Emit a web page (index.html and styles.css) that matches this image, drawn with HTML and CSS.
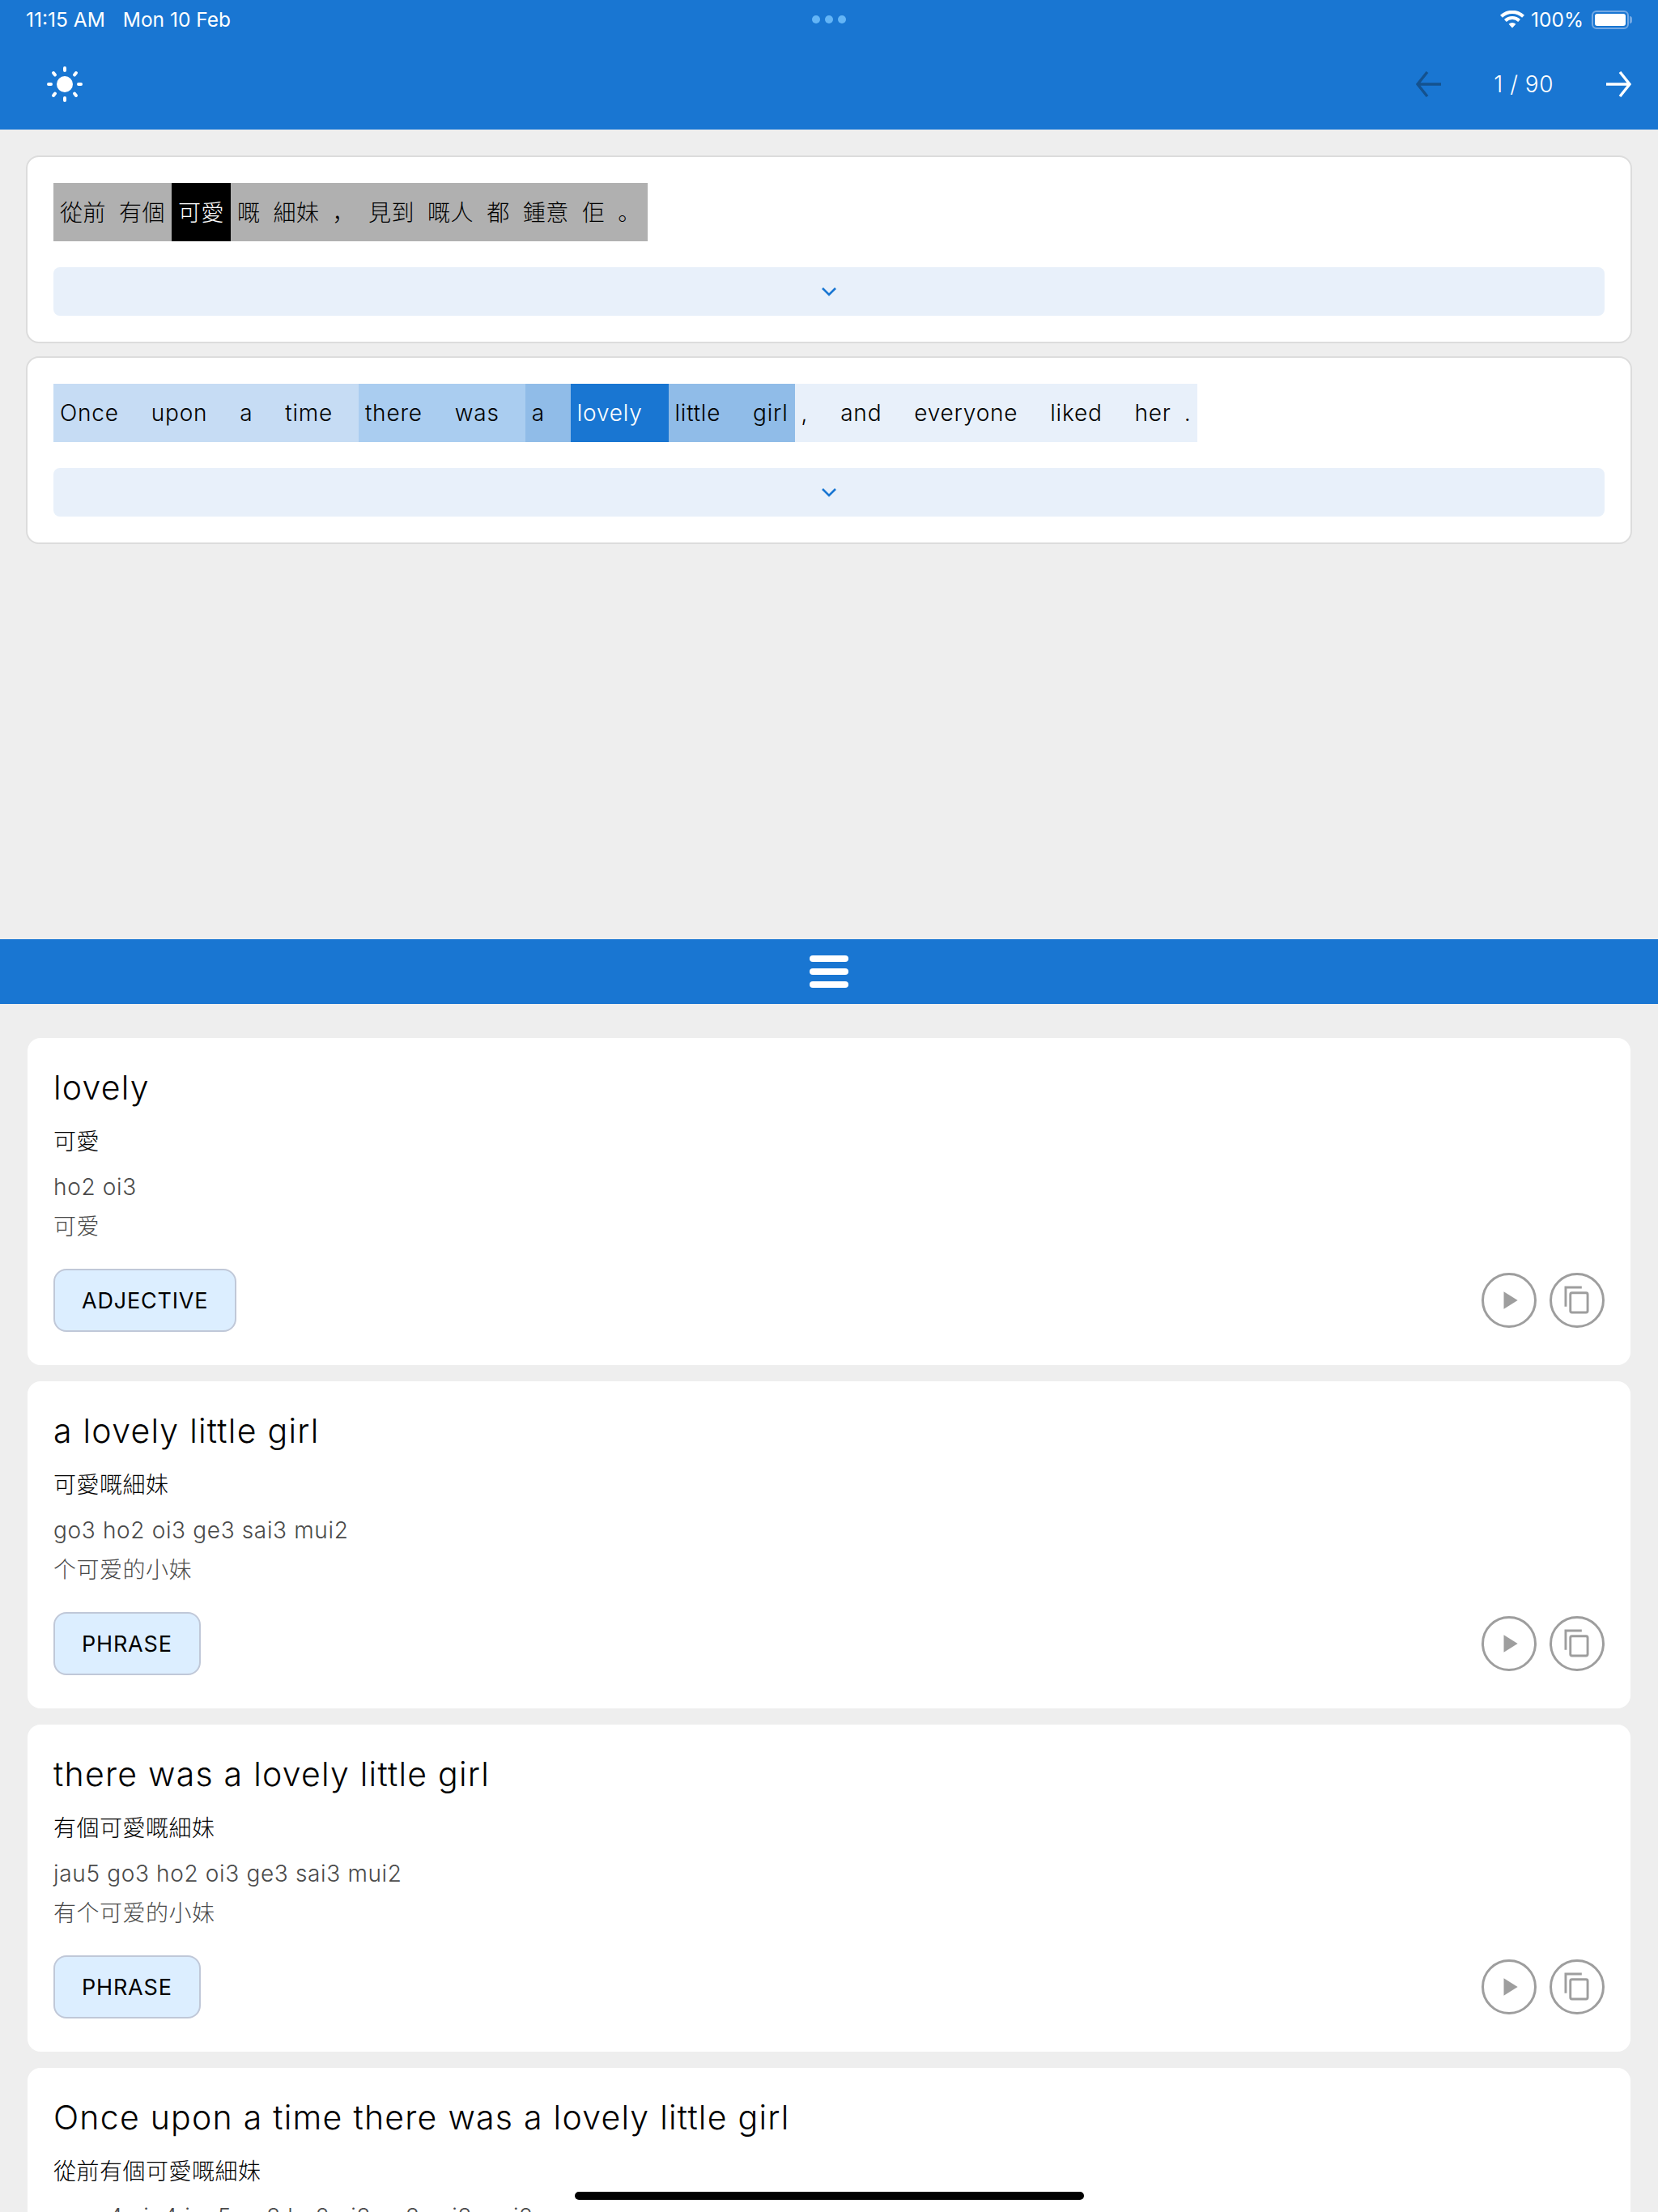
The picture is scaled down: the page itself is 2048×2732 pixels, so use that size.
FILE: index.html
```html
<!DOCTYPE html>
<html lang="en">
<head>
<meta charset="utf-8">
<title>Reader</title>
<link rel="stylesheet" href="styles.css">
</head>
<body>
<header class="appbar">
  <div class="status">
    <div class="status-left"><span>11:15 AM</span><span>Mon 10 Feb</span></div>
    <div class="status-dots"><i></i><i></i><i></i></div>
    <div class="status-right">
      <svg class="wifi" viewBox="0 0 30 22" width="30" height="22"><path d="M15 21.500 10.600 16.800a6.500 6.500 0 0 1 8.800 0zM7.800 13.900 5 11a14.400 14.400 0 0 1 20 0l-2.800 2.900a10.400 10.400 0 0 0-14.400 0zM2.900 8.800 0 5.800a21.600 21.600 0 0 1 30 0l-2.900 3a17.500 17.500 0 0 0-24.200 0z" fill="#fff"/></svg>
      <span>100%</span>
      <div class="battery"><div class="battery-fill"></div></div>
      <div class="battery-cap"></div>
    </div>
  </div>
  <div class="toolbar">
    <svg class="sun" viewBox="0 0 44 44" width="44" height="44"><circle cx="22" cy="22" r="10" fill="#fff"/><g stroke="#fff" stroke-width="4" stroke-linecap="round"><path d="M22 2v3M22 39v3M2 22h3M39 22h3M8 8l2 2.500M34 33.500l2 2.500M36 8l-2 2.500M10 33.500 8 36"/></g></svg>
    <div class="pager">
      <svg viewBox="0 0 32 32" width="32" height="32"><path d="M32 16H4M15 1 3 16l12 15" fill="none" stroke="#14528f" stroke-width="3.400"/></svg>
      <span class="pager-text">1 / 90</span>
      <svg viewBox="0 0 32 32" width="32" height="32"><path d="M0 16h28M17 1l12 15-12 15" fill="none" stroke="#fff" stroke-width="3.400"/></svg>
    </div>
  </div>
</header>

<section class="top-pane">
  <div class="panel">
    <div class="sentence zh">
      <div class="grp g-grey"><span class="w">從前</span><span class="w">有個</span></div>
      <div class="grp g-black"><span class="w">可愛</span></div>
      <div class="grp g-grey"><span class="w">嘅</span><span class="w">細妹</span><span class="w mark">，</span><span class="w">見到</span><span class="w">嘅人</span><span class="w">都</span><span class="w">鍾意</span><span class="w">佢</span><span class="w mark">。</span></div>
    </div>
    <div class="expand"><svg viewBox="0 0 20 12" width="20" height="12"><path d="M2 2l8 8 8-8" fill="none" stroke="#1976d2" stroke-width="2.600"/></svg></div>
  </div>
  <div class="panel">
    <div class="sentence">
      <div class="grp g-1"><span class="w sp">Once</span><span class="w sp">upon</span><span class="w sp">a</span><span class="w sp">time</span></div>
      <div class="grp g-2"><span class="w sp">there</span><span class="w sp">was</span></div>
      <div class="grp g-3"><span class="w sp">a</span></div>
      <div class="grp g-4"><span class="w sp">lovely</span></div>
      <div class="grp g-3"><span class="w sp">little</span><span class="w">girl</span></div>
      <div class="grp g-0"><span class="w sp">,</span><span class="w sp">and</span><span class="w sp">everyone</span><span class="w sp">liked</span><span class="w">her</span><span class="w">.</span></div>
    </div>
    <div class="expand"><svg viewBox="0 0 20 12" width="20" height="12"><path d="M2 2l8 8 8-8" fill="none" stroke="#1976d2" stroke-width="2.600"/></svg></div>
  </div>
</section>

<div class="splitter"><div class="handle"><i></i><i></i><i></i></div></div>

<section class="list">
  <article class="card">
    <h2 class="title">lovely</h2>
    <p class="hant">可愛</p>
    <p class="jyut">ho2 oi3</p>
    <p class="hans">可爱</p>
    <div class="foot">
      <span class="chip">ADJECTIVE</span>
      <div class="actions">
        <button class="round"><svg viewBox="0 0 64 64" width="64" height="64"><path d="M25.300 21v22l17.700-11z" fill="#9e9e9e"/></svg></button>
        <button class="round"><svg viewBox="0 0 64 64" width="64" height="64"><path d="M38 15.500H17.500V40" fill="none" stroke="#9e9e9e" stroke-width="3"/><rect x="23.500" y="22.500" width="22" height="25" rx="2" fill="none" stroke="#9e9e9e" stroke-width="3"/></svg></button>
      </div>
    </div>
  </article>
  <article class="card">
    <h2 class="title">a lovely little girl</h2>
    <p class="hant">可愛嘅細妹</p>
    <p class="jyut">go3 ho2 oi3 ge3 sai3 mui2</p>
    <p class="hans">个可爱的小妹</p>
    <div class="foot">
      <span class="chip">PHRASE</span>
      <div class="actions">
        <button class="round"><svg viewBox="0 0 64 64" width="64" height="64"><path d="M25.300 21v22l17.700-11z" fill="#9e9e9e"/></svg></button>
        <button class="round"><svg viewBox="0 0 64 64" width="64" height="64"><path d="M38 15.500H17.500V40" fill="none" stroke="#9e9e9e" stroke-width="3"/><rect x="23.500" y="22.500" width="22" height="25" rx="2" fill="none" stroke="#9e9e9e" stroke-width="3"/></svg></button>
      </div>
    </div>
  </article>
  <article class="card">
    <h2 class="title">there was a lovely little girl</h2>
    <p class="hant">有個可愛嘅細妹</p>
    <p class="jyut">jau5 go3 ho2 oi3 ge3 sai3 mui2</p>
    <p class="hans">有个可爱的小妹</p>
    <div class="foot">
      <span class="chip">PHRASE</span>
      <div class="actions">
        <button class="round"><svg viewBox="0 0 64 64" width="64" height="64"><path d="M25.300 21v22l17.700-11z" fill="#9e9e9e"/></svg></button>
        <button class="round"><svg viewBox="0 0 64 64" width="64" height="64"><path d="M38 15.500H17.500V40" fill="none" stroke="#9e9e9e" stroke-width="3"/><rect x="23.500" y="22.500" width="22" height="25" rx="2" fill="none" stroke="#9e9e9e" stroke-width="3"/></svg></button>
      </div>
    </div>
  </article>
  <article class="card">
    <h2 class="title">Once upon a time there was a lovely little girl</h2>
    <p class="hant">從前有個可愛嘅細妹</p>
    <p class="jyut">cung4 cin4 jau5 go3 ho2 oi3 ge3 sai3 mui2</p>
  </article>
</section>

<div class="home-indicator"></div>
</body>
</html>
```
FILE: styles.css
```css
* { box-sizing: border-box; }
html, body { margin: 0; height: 2732px; overflow: hidden; }
body {
  width: 2048px;
  background: #eeeeee;
  color: #000;
  font-family: Inter, "Noto Sans CJK TC", sans-serif;
  font-weight: 300;
  position: relative;
}
p, h2 { margin: 0; font-weight: 300; }

.appbar { height: 160px; background: #1976d2; color: #fff; padding: 0 32px; }
.status { height: 48px; display: flex; align-items: center; justify-content: space-between; position: relative; font-size: 24.500px; font-weight: 400; }
.status-left { display: flex; gap: 22px; }
.status-dots { position: absolute; left: 50%; top: 19px; transform: translateX(-50%); display: flex; gap: 6px; }
.status-dots i { width: 10px; height: 10px; border-radius: 50%; background: #64b5f6; }
.status-right { display: flex; align-items: center; gap: 8px; }
.battery { width: 46px; height: 23px; border: 2px solid #74a9e4; border-radius: 6px; padding: 2px; margin-left: 2px; }
.battery-fill { width: 100%; height: 100%; background: #fff; border-radius: 3px; }
.battery-cap { width: 3px; height: 9px; margin-left: -7px; background: #74a9e4; border-radius: 0 3px 3px 0; }
.toolbar { height: 112px; display: flex; align-items: center; justify-content: space-between; padding: 0 0 0 26px; }
.pager { display: flex; align-items: center; gap: 65px; }
.pager-text { font-size: 28px; font-weight: 300; letter-spacing: 0.5px; }

.top-pane { height: 1000px; padding: 32px 32px 0; display: flex; flex-direction: column; gap: 16px; }
.panel { height: 232px; background: #fff; border: 2px solid #dcdcdc; border-radius: 16px; padding: 32px; }
.sentence { display: flex; height: 72px; font-size: 28px; font-weight: 350; letter-spacing: 0.8px; }
.zh { letter-spacing: 0.5px; font-weight: 300; }
.grp { display: flex; align-items: center; }
.zh .grp { padding-bottom: 2px; }
.w { padding: 0 8px; }
.w.sp { margin-right: 23.900px; }
.mark { font-family: "Noto Sans CJK SC", sans-serif; }
.g-grey { background: #b0b0b0; }
.g-black { background: #000; color: #fff; }
.g-0 { background: #e8f0fa; }
.g-1 { background: #c6dcf4; }
.g-2 { background: #aacdf0; }
.g-3 { background: #90bce8; }
.g-4 { background: #1976d2; color: #fff; }
.expand { height: 60px; margin-top: 32px; background: #e8f0fa; border-radius: 8px; display: flex; align-items: center; justify-content: center; }

.splitter { height: 80px; background: #1976d2; display: flex; align-items: center; justify-content: center; }
.handle { display: flex; flex-direction: column; gap: 8px; }
.handle i { display: block; width: 48px; height: 8px; border-radius: 4px; background: #fff; }

.list { height: 1492px; overflow: hidden; padding: 42px 34px 0; display: flex; flex-direction: column; gap: 20px; }
.card { height: 404px; background: #fff; border-radius: 16px; padding: 33px 32px 0; flex: none; }
.title { font-size: 41px; line-height: 56px; letter-spacing: 1.25px; font-weight: 350; }
.hant { font-size: 28px; line-height: 40px; margin-top: 19px; letter-spacing: 0.5px; }
.jyut { font-size: 28px; line-height: 40px; margin-top: 16px; color: #4a4a4a; letter-spacing: 0.65px; }
.hans { font-family: Inter, "Noto Sans CJK SC", sans-serif; font-size: 28px; line-height: 40px; margin-top: 9px; color: #4a4a4a; letter-spacing: 0.5px; }
.foot { display: flex; align-items: center; justify-content: space-between; margin-top: 32px; }
.chip { height: 78px; padding: 0 33px; display: flex; align-items: center; background: #dceeff; border: 2px solid #c0c8d8; border-radius: 16px; font-size: 27px; font-weight: 400; letter-spacing: 0.8px; }
.actions { display: flex; gap: 16px; }
.round { width: 68px; height: 68px; padding: 0; background: none; border: 3px solid #9e9e9e; border-radius: 50%; display: flex; align-items: center; justify-content: center; }

.home-indicator { position: absolute; left: 710px; top: 2707px; width: 629px; height: 10px; border-radius: 5px; background: #000; }
```
